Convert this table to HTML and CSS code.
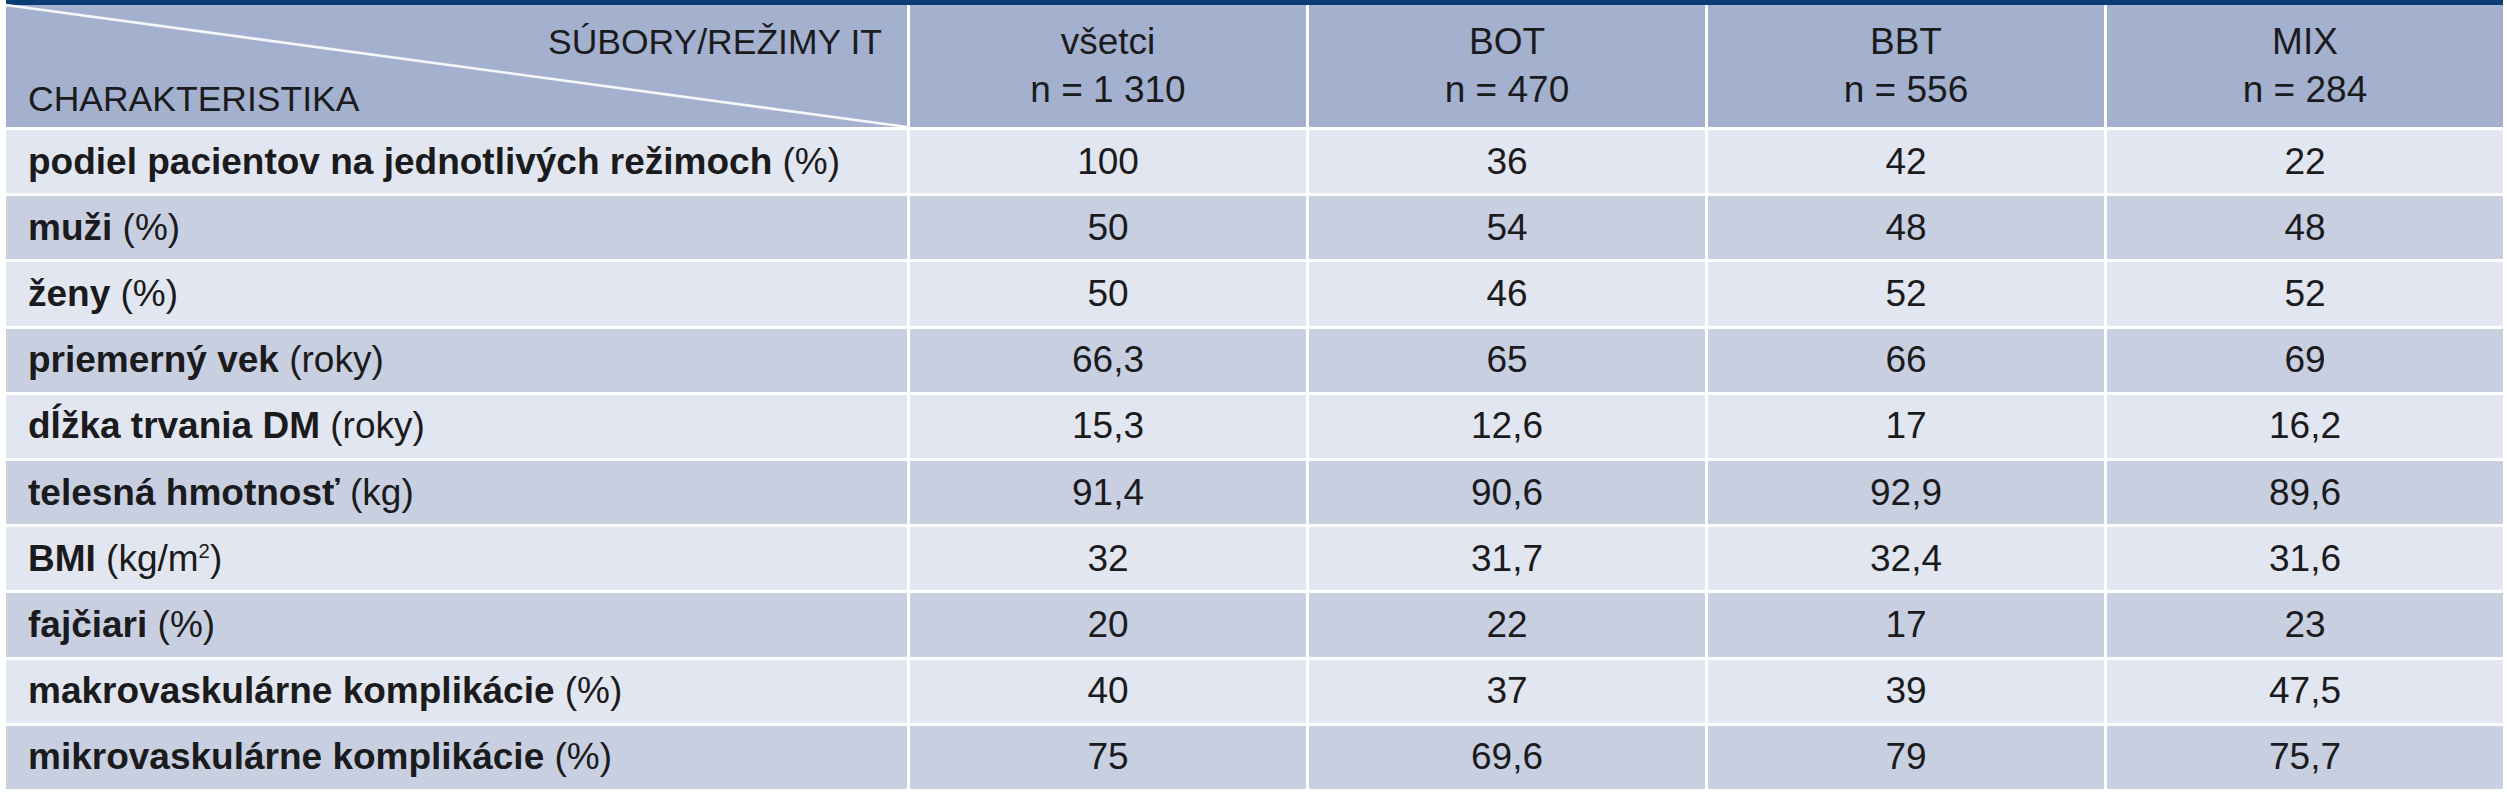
FILE: index.html
```html
<!DOCTYPE html>
<html lang="sk">
<head>
<meta charset="utf-8">
<title>Charakteristika súborov</title>
<link rel="stylesheet" href="styles.css">
</head>
<body>
<div class="table">
  <div class="row header">
    <div class="cell corner">
      <svg class="diag" viewBox="0 0 100 100" preserveAspectRatio="none" aria-hidden="true">
        <line x1="0" y1="0" x2="100" y2="100" stroke="#ffffff" stroke-width="2.6" vector-effect="non-scaling-stroke" stroke-opacity="0.9"/>
      </svg>
      <span class="corner-top">SÚBORY/REŽIMY IT</span>
      <span class="corner-bottom">CHARAKTERISTIKA</span>
    </div>
    <div class="cell colhead"><span>všetci</span><span>n = 1 310</span></div>
    <div class="cell colhead"><span>BOT</span><span>n = 470</span></div>
    <div class="cell colhead"><span>BBT</span><span>n = 556</span></div>
    <div class="cell colhead"><span>MIX</span><span>n = 284</span></div>
  </div>
  <div class="row light">
    <div class="cell label"><span><b>podiel pacientov na jednotlivých režimoch</b> (%)</span></div>
    <div class="cell num">100</div><div class="cell num">36</div><div class="cell num">42</div><div class="cell num">22</div>
  </div>
  <div class="row dark">
    <div class="cell label"><span><b>muži</b> (%)</span></div>
    <div class="cell num">50</div><div class="cell num">54</div><div class="cell num">48</div><div class="cell num">48</div>
  </div>
  <div class="row light">
    <div class="cell label"><span><b>ženy</b> (%)</span></div>
    <div class="cell num">50</div><div class="cell num">46</div><div class="cell num">52</div><div class="cell num">52</div>
  </div>
  <div class="row dark">
    <div class="cell label"><span><b>priemerný vek</b> (roky)</span></div>
    <div class="cell num">66,3</div><div class="cell num">65</div><div class="cell num">66</div><div class="cell num">69</div>
  </div>
  <div class="row light">
    <div class="cell label"><span><b>dĺžka trvania DM</b> (roky)</span></div>
    <div class="cell num">15,3</div><div class="cell num">12,6</div><div class="cell num">17</div><div class="cell num">16,2</div>
  </div>
  <div class="row dark">
    <div class="cell label"><span><b>telesná hmotnosť</b> (kg)</span></div>
    <div class="cell num">91,4</div><div class="cell num">90,6</div><div class="cell num">92,9</div><div class="cell num">89,6</div>
  </div>
  <div class="row light">
    <div class="cell label"><span><b>BMI</b> (kg/m<sup class="sup">2</sup>)</span></div>
    <div class="cell num">32</div><div class="cell num">31,7</div><div class="cell num">32,4</div><div class="cell num">31,6</div>
  </div>
  <div class="row dark">
    <div class="cell label"><span><b>fajčiari</b> (%)</span></div>
    <div class="cell num">20</div><div class="cell num">22</div><div class="cell num">17</div><div class="cell num">23</div>
  </div>
  <div class="row light">
    <div class="cell label"><span><b>makrovaskulárne komplikácie</b> (%)</span></div>
    <div class="cell num">40</div><div class="cell num">37</div><div class="cell num">39</div><div class="cell num">47,5</div>
  </div>
  <div class="row dark">
    <div class="cell label"><span><b>mikrovaskulárne komplikácie</b> (%)</span></div>
    <div class="cell num">75</div><div class="cell num">69,6</div><div class="cell num">79</div><div class="cell num">75,7</div>
  </div>
</div>
</body>
</html>
```

FILE: styles.css
```css
html, body {
  margin: 0;
  padding: 0;
  background: #ffffff;
}

body {
  font-family: "Liberation Sans", Arial, sans-serif;
  color: #1b1b1d;
}

.table {
  display: grid;
  grid-template-columns: 901px repeat(4, 1fr);
  grid-template-rows: 122px repeat(10, 63.2px);
  column-gap: 3px;
  row-gap: 3px;
  width: 2497px;
  margin-left: 6px;
  border-top: 5px solid #0b3d75;
  background: #ffffff;
}

.row {
  display: contents;
}

.cell {
  box-sizing: border-box;
  display: flex;
  align-items: center;
  font-size: 37px;
  white-space: nowrap;
}

.header .cell {
  background: #a3b1cf;
}

.light .cell {
  background: #e2e6f0;
}

.dark .cell {
  background: #c7cfe1;
}

.corner {
  position: relative;
  flex-direction: column;
  align-items: stretch;
  justify-content: space-between;
  padding: 13px 25px 4px 22px;
  font-size: 35.5px;
  line-height: 48px;
}

.diag {
  position: absolute;
  left: 0;
  top: 0;
  width: 100%;
  height: 100%;
  overflow: visible;
}

.corner-top,
.corner-bottom {
  position: relative;
}

.corner-top {
  text-align: right;
}

.corner-bottom {
  text-align: left;
}

.colhead {
  flex-direction: column;
  justify-content: center;
  line-height: 48px;
}

.label {
  padding-left: 22px;
}

.label b {
  font-weight: bold;
}

.num {
  justify-content: center;
}

.sup {
  font-size: 0.55em;
  line-height: 0;
  vertical-align: super;
}
```
